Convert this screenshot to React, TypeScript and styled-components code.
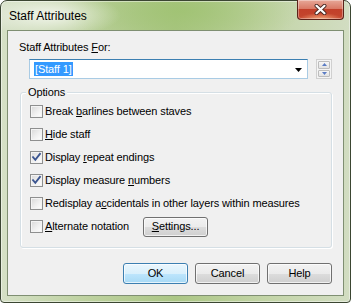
import styled, { createGlobalStyle } from "styled-components";

const GlobalStyle = createGlobalStyle`
  html, body {
    margin: 0;
    padding: 0;
    background: #ffffff;
  }
  body {
    font-family: "Liberation Sans", Arial, sans-serif;
  }
`;

type CheckProps = {
  checked?: boolean;
};

const CheckBox = ({ checked }: CheckProps) => (
  <Box>
    {checked && (
      <svg width="11" height="11" viewBox="0 0 11 11">
        <path
          d="M2 5.2 L4.3 7.8 L9 1.8"
          fill="none"
          stroke="#3b5590"
          strokeWidth="1.8"
          strokeLinecap="square"
        />
      </svg>
    )}
  </Box>
);

const options: { label: React.ReactNode; checked: boolean }[] = [
  { label: <>Break <u>b</u>arlines between staves</>, checked: false },
  { label: <><u>H</u>ide staff</>, checked: false },
  { label: <>Display <u>r</u>epeat endings</>, checked: true },
  { label: <>Display measure <u>n</u>umbers</>, checked: true },
  { label: <>Redisplay a<u>c</u>cidentals in other layers within measures</>, checked: false }
];

const App = () => {
  return (
    <>
      <GlobalStyle />
      <Window>
        <TitleBar>
          <Title>Staff Attributes</Title>
          <CloseButton>
            <svg width="13" height="11" viewBox="0 0 13 11">
              <path d="M2.5 1.8 L10.5 9.2 M10.5 1.8 L2.5 9.2" stroke="#4a2a24" strokeWidth="4" strokeLinecap="round" />
              <path d="M2.5 1.8 L10.5 9.2 M10.5 1.8 L2.5 9.2" stroke="#ffffff" strokeWidth="2.2" strokeLinecap="round" />
            </svg>
          </CloseButton>
        </TitleBar>
        <Client>
          <FieldLabel>Staff Attributes <u>F</u>or:</FieldLabel>
          <ComboRow>
            <Combo>
              <Selected>[Staff 1]</Selected>
              <svg width="7" height="4" viewBox="0 0 7 4">
                <polygon points="0,0 7,0 3.5,4" fill="#000" />
              </svg>
            </Combo>
            <Spinner>
              <SpinButton>
                <svg width="5" height="3" viewBox="0 0 5 3">
                  <polygon points="0,3 5,3 2.5,0" fill="#5b7cc4" />
                </svg>
              </SpinButton>
              <SpinButton>
                <svg width="5" height="3" viewBox="0 0 5 3">
                  <polygon points="0,0 5,0 2.5,3" fill="#5b7cc4" />
                </svg>
              </SpinButton>
            </Spinner>
          </ComboRow>
          <Group>
            <Legend>Options</Legend>
            {options.map((o, i) => (
              <OptionRow key={i}>
                <CheckBox checked={o.checked} />
                <span>{o.label}</span>
              </OptionRow>
            ))}
            <OptionRow>
              <CheckBox />
              <span><u>A</u>lternate notation</span>
              <SmallButton><u>S</u>ettings...</SmallButton>
            </OptionRow>
          </Group>
          <ButtonRow>
            <PushButton $isDefault>OK</PushButton>
            <PushButton>Cancel</PushButton>
            <PushButton>Help</PushButton>
          </ButtonRow>
        </Client>
      </Window>
    </>
  );
};

export default App;

const Window = styled.div({
  width: '351px',
  height: '303px',
  boxSizing: 'border-box',
  border: '1px solid #3b4632',
  borderRadius: '7px 7px 4px 4px',
  padding: '0 6px 6px 6px',
  display: 'flex',
  flexDirection: 'column',
  background:
    'radial-gradient(ellipse 70px 22px at 50px 14px, rgba(255,255,255,0.75), rgba(255,255,255,0) 100%),' +
    'radial-gradient(ellipse 120px 40px at 180px 10px, rgba(160,195,115,0.9), rgba(160,195,115,0) 100%),' +
    'linear-gradient(to right, #d5e0c6 0%, #bdd19f 25%, #abc685 50%, #c2d4a6 75%, #d2ddc2 100%)',
  boxShadow: 'inset 0 0 0 1px rgba(255,255,255,0.45)'
});

const TitleBar = styled.div({
  height: '29px',
  display: 'flex',
  justifyContent: 'space-between',
  alignItems: 'flex-start'
});

const Title = styled.div({
  fontSize: '12px',
  color: '#000',
  marginTop: '8px',
  marginLeft: '2px',
  lineHeight: '14px'
});

const CloseButton = styled.div({
  width: '47px',
  height: '20px',
  marginTop: '-1px',
  boxSizing: 'border-box',
  border: '1px solid #5b2219',
  borderTop: 'none',
  borderRadius: '0 0 4px 4px',
  display: 'flex',
  alignItems: 'center',
  justifyContent: 'center',
  background:
    'radial-gradient(ellipse 22px 6px at 50% 100%, rgba(255,190,140,0.8), rgba(255,190,140,0) 100%),' +
    'linear-gradient(to bottom, #e7a898 0%, #d97a66 45%, #c2402a 50%, #c4462f 100%)',
  boxShadow: 'inset 0 0 0 1px rgba(255,255,255,0.35)'
});

const Client = styled.div({
  flex: '1',
  boxSizing: 'border-box',
  border: '1px solid #7f8f72',
  background: '#f0f0f0',
  padding: '10px 11px 0 12px',
  display: 'flex',
  flexDirection: 'column',
  fontSize: '11px',
  letterSpacing: '-0.12px',
  color: '#000',
  lineHeight: '13px'
});

const FieldLabel = styled.div({
  marginLeft: '-1px',
  height: '13px'
});

const ComboRow = styled.div({
  display: 'flex',
  gap: '8px',
  marginTop: '5px',
  marginLeft: '9px'
});

const Combo = styled.div({
  width: '280px',
  height: '20px',
  boxSizing: 'border-box',
  background: '#fff',
  border: '1px solid #a9cbe4',
  borderTopColor: '#3c7fb1',
  display: 'flex',
  alignItems: 'center',
  justifyContent: 'space-between',
  padding: '0 5px 0 4px',
  '& svg': {
    marginTop: '1px'
  }
});

const Selected = styled.span({
  background: '#3399ff',
  color: '#fff',
  padding: '1px 1px',
  lineHeight: '12px'
});

const Spinner = styled.div({
  width: '16px',
  height: '20px',
  boxSizing: 'border-box',
  border: '1px solid #d0d0d0',
  padding: '1px',
  display: 'flex',
  flexDirection: 'column',
  gap: '1px',
  background: '#f4f4f4'
});

const SpinButton = styled.div({
  flex: '1',
  display: 'flex',
  alignItems: 'center',
  justifyContent: 'center',
  background: 'linear-gradient(to bottom, #f6f6f6, #e2e2e2)',
  border: '1px solid #bcbcbc',
  borderRadius: '1px'
});

const Group = styled.div({
  position: 'relative',
  marginTop: '13px',
  border: '1px solid #d5dfe5',
  borderRadius: '3px',
  boxShadow: 'inset 1px 1px 0 #fff, 1px 1px 0 #fff',
  padding: '7px 8px 9px 9px',
  display: 'flex',
  flexDirection: 'column'
});

const Legend = styled.div({
  position: 'absolute',
  top: '-7px',
  left: '5px',
  padding: '0 2px',
  background: '#f0f0f0'
});

const OptionRow = styled.div({
  height: '23px',
  display: 'flex',
  alignItems: 'center',
  gap: '2px',
  whiteSpace: 'nowrap'
});

const Box = styled.div({
  width: '13px',
  height: '13px',
  boxSizing: 'border-box',
  border: '1px solid #8e8f8f',
  background: 'linear-gradient(135deg, #d8d8d8 0%, #f0f0f0 55%, #ffffff 100%)',
  boxShadow: 'inset 0 0 0 1px #f4f4f4',
  display: 'flex',
  alignItems: 'center',
  justifyContent: 'center',
  flexShrink: '0'
});

const buttonFace = 'linear-gradient(to bottom, #f2f2f2 0%, #ebebeb 50%, #dddddd 50%, #cfcfcf 100%)';
const defaultFace = 'linear-gradient(to bottom, #eaf6fd 0%, #d9f0fc 50%, #bee6fd 50%, #a7d9f5 100%)';

const SmallButton = styled.div({
  marginLeft: '12px',
  width: '65px',
  height: '20px',
  boxSizing: 'border-box',
  border: '1px solid #707070',
  borderRadius: '3px',
  background: buttonFace,
  boxShadow: 'inset 0 0 0 1px rgba(255,255,255,0.7)',
  display: 'flex',
  alignItems: 'center',
  justifyContent: 'center'
});

const ButtonRow = styled.div({
  display: 'flex',
  justifyContent: 'flex-end',
  gap: '7px',
  marginTop: '15px'
});

const PushButton = styled.div<{ $isDefault?: boolean }>(({ $isDefault }) => ({
  width: '65px',
  height: '21px',
  boxSizing: 'border-box',
  border: `1px solid ${$isDefault ? '#3c7fb1' : '#707070'}`,
  borderRadius: '3px',
  background: $isDefault ? defaultFace : buttonFace,
  boxShadow: 'inset 0 0 0 1px rgba(255,255,255,0.7)',
  display: 'flex',
  alignItems: 'center',
  justifyContent: 'center'
}));
